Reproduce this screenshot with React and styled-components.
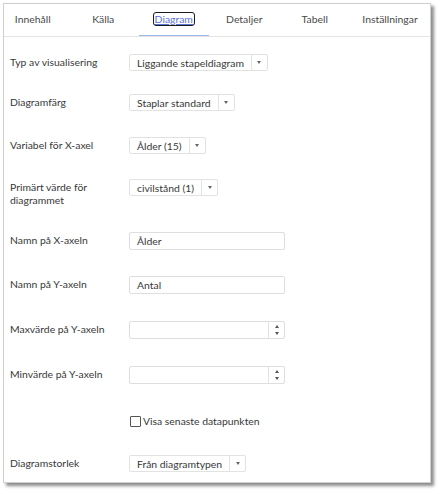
import React from 'react';
import styled, { createGlobalStyle } from 'styled-components';

const GlobalStyle = createGlobalStyle`
  html, body {
    margin: 0;
    padding: 0;
    background: #fff;
  }
  body {
    font-family: Lato, Roboto, "Liberation Sans", sans-serif;
    font-size: 10.4px;
    color: #383838;
  }
`;

const Page = styled.div`
  width: 440px;
  height: 494px;
  padding: 3px 0 0 3px;
  box-sizing: border-box;
`;

const Panel = styled.div`
  width: 428px;
  height: 480px;
  box-sizing: border-box;
  border: 1px solid #cfcfcf;
  background: #fff;
  box-shadow: 3px 3px 3px rgba(0, 0, 0, 0.45);
  overflow: hidden;
`;

const TabBar = styled.div`
  display: flex;
  justify-content: flex-end;
  height: 32px;
  border-bottom: 1px solid #e4e4e4;
  overflow: hidden;
`;

const Tab = styled.div`
  flex: none;
  width: 70.5px;
  box-sizing: border-box;
  display: flex;
  align-items: center;
  justify-content: center;
  color: ${p => (p.$active ? '#5a73d8' : '#4a4a4a')};
  border-bottom: 2px solid ${p => (p.$active ? '#9bb6f0' : 'transparent')};
  margin-bottom: -1px;
  padding-bottom: 2px;
  white-space: nowrap;
  &:last-child {
    width: 80px;
  }
`;

const FocusText = styled.span`
  outline: 1.5px solid #1c1c1c;
  border-radius: 2px;
  text-decoration: underline;
  padding: 0 1px;
  line-height: 12px;
`;

const Form = styled.div`
  display: flex;
  flex-direction: column;
  padding: 17px 0 0 6px;
`;

const Row = styled.div`
  display: grid;
  grid-template-columns: 119px auto;
  align-items: start;
  height: ${p => p.$h}px;
`;

const Label = styled.div`
  line-height: 13px;
  padding-top: 2px;
`;

const Select = styled.div`
  display: inline-flex;
  justify-self: start;
  height: 17px;
  box-sizing: border-box;
  border: 1px solid #e2e2e2;
  border-radius: 2px;
  background: #fff;
`;

const SelectValue = styled.div`
  display: flex;
  align-items: center;
  padding: 0 7px;
  white-space: nowrap;
`;

const Caret = styled.div`
  width: 15px;
  border-left: 1px solid #e2e2e2;
  display: flex;
  align-items: center;
  justify-content: center;
  &::after {
    content: '';
    border-left: 2.5px solid transparent;
    border-right: 2.5px solid transparent;
    border-top: 3px solid #666;
  }
`;

const TextInput = styled.div`
  width: 156px;
  height: 18px;
  box-sizing: border-box;
  border: 1px solid #dedede;
  border-radius: 2px;
  display: flex;
  align-items: center;
  padding-left: 7px;
`;

const NumberInput = styled.div`
  width: 156px;
  height: 18px;
  box-sizing: border-box;
  border: 1px solid #dedede;
  border-radius: 2px;
  display: flex;
  justify-content: flex-end;
`;

const Spinner = styled.div`
  width: 15px;
  border-left: 1px solid #e2e2e2;
  display: flex;
  flex-direction: column;
  align-items: center;
  justify-content: center;
  gap: 4px;
`;

const Arrow = styled.span`
  width: 0;
  height: 0;
  border-left: 2.5px solid transparent;
  border-right: 2.5px solid transparent;
  ${p => (p.$up ? 'border-bottom: 3px solid #555;' : 'border-top: 3px solid #555;')}
`;

const CheckLabel = styled.label`
  grid-column: 2;
  display: flex;
  align-items: center;
  height: 18px;
  gap: 2px;
`;

const Box = styled.span`
  width: 11px;
  height: 11px;
  box-sizing: border-box;
  border: 1px solid #555;
  border-radius: 1px;
  background: #fff;
  margin-left: 1px;
`;

const tabs = ['Innehåll', 'Källa', 'Diagram', 'Detaljer', 'Tabell', 'Inställningar'];

const Dropdown = ({ value }) => (
  <Select>
    <SelectValue>{value}</SelectValue>
    <Caret />
  </Select>
);

const Num = () => (
  <NumberInput>
    <Spinner>
      <Arrow $up />
      <Arrow />
    </Spinner>
  </NumberInput>
);

export default function App() {
  return (
    <>
      <GlobalStyle />
      <Page>
        <Panel>
          <TabBar>
            {tabs.map(t => (
              <Tab key={t} $active={t === 'Diagram'}>
                {t === 'Diagram' ? <FocusText>{t}</FocusText> : t}
              </Tab>
            ))}
          </TabBar>
          <Form>
            <Row $h={40}>
              <Label>Typ av visualisering</Label>
              <Dropdown value="Liggande stapeldiagram" />
            </Row>
            <Row $h={43}>
              <Label>Diagramfärg</Label>
              <Dropdown value="Staplar standard" />
            </Row>
            <Row $h={42}>
              <Label>Variabel för X-axel</Label>
              <Dropdown value="Ålder (15)" />
            </Row>
            <Row $h={53}>
              <Label>Primärt värde för<br />diagrammet</Label>
              <Dropdown value="civilstånd (1)" />
            </Row>
            <Row $h={44}>
              <Label>Namn på X-axeln</Label>
              <TextInput>Ålder</TextInput>
            </Row>
            <Row $h={45}>
              <Label>Namn på Y-axeln</Label>
              <TextInput>Antal</TextInput>
            </Row>
            <Row $h={45}>
              <Label>Maxvärde på Y-axeln</Label>
              <Num />
            </Row>
            <Row $h={46}>
              <Label>Minvärde på Y-axeln</Label>
              <Num />
            </Row>
            <Row $h={43}>
              <CheckLabel>
                <Box />
                Visa senaste datapunkten
              </CheckLabel>
            </Row>
            <Row $h={20}>
              <Label>Diagramstorlek</Label>
              <Dropdown value="Från diagramtypen" />
            </Row>
          </Form>
        </Panel>
      </Page>
    </>
  );
}
